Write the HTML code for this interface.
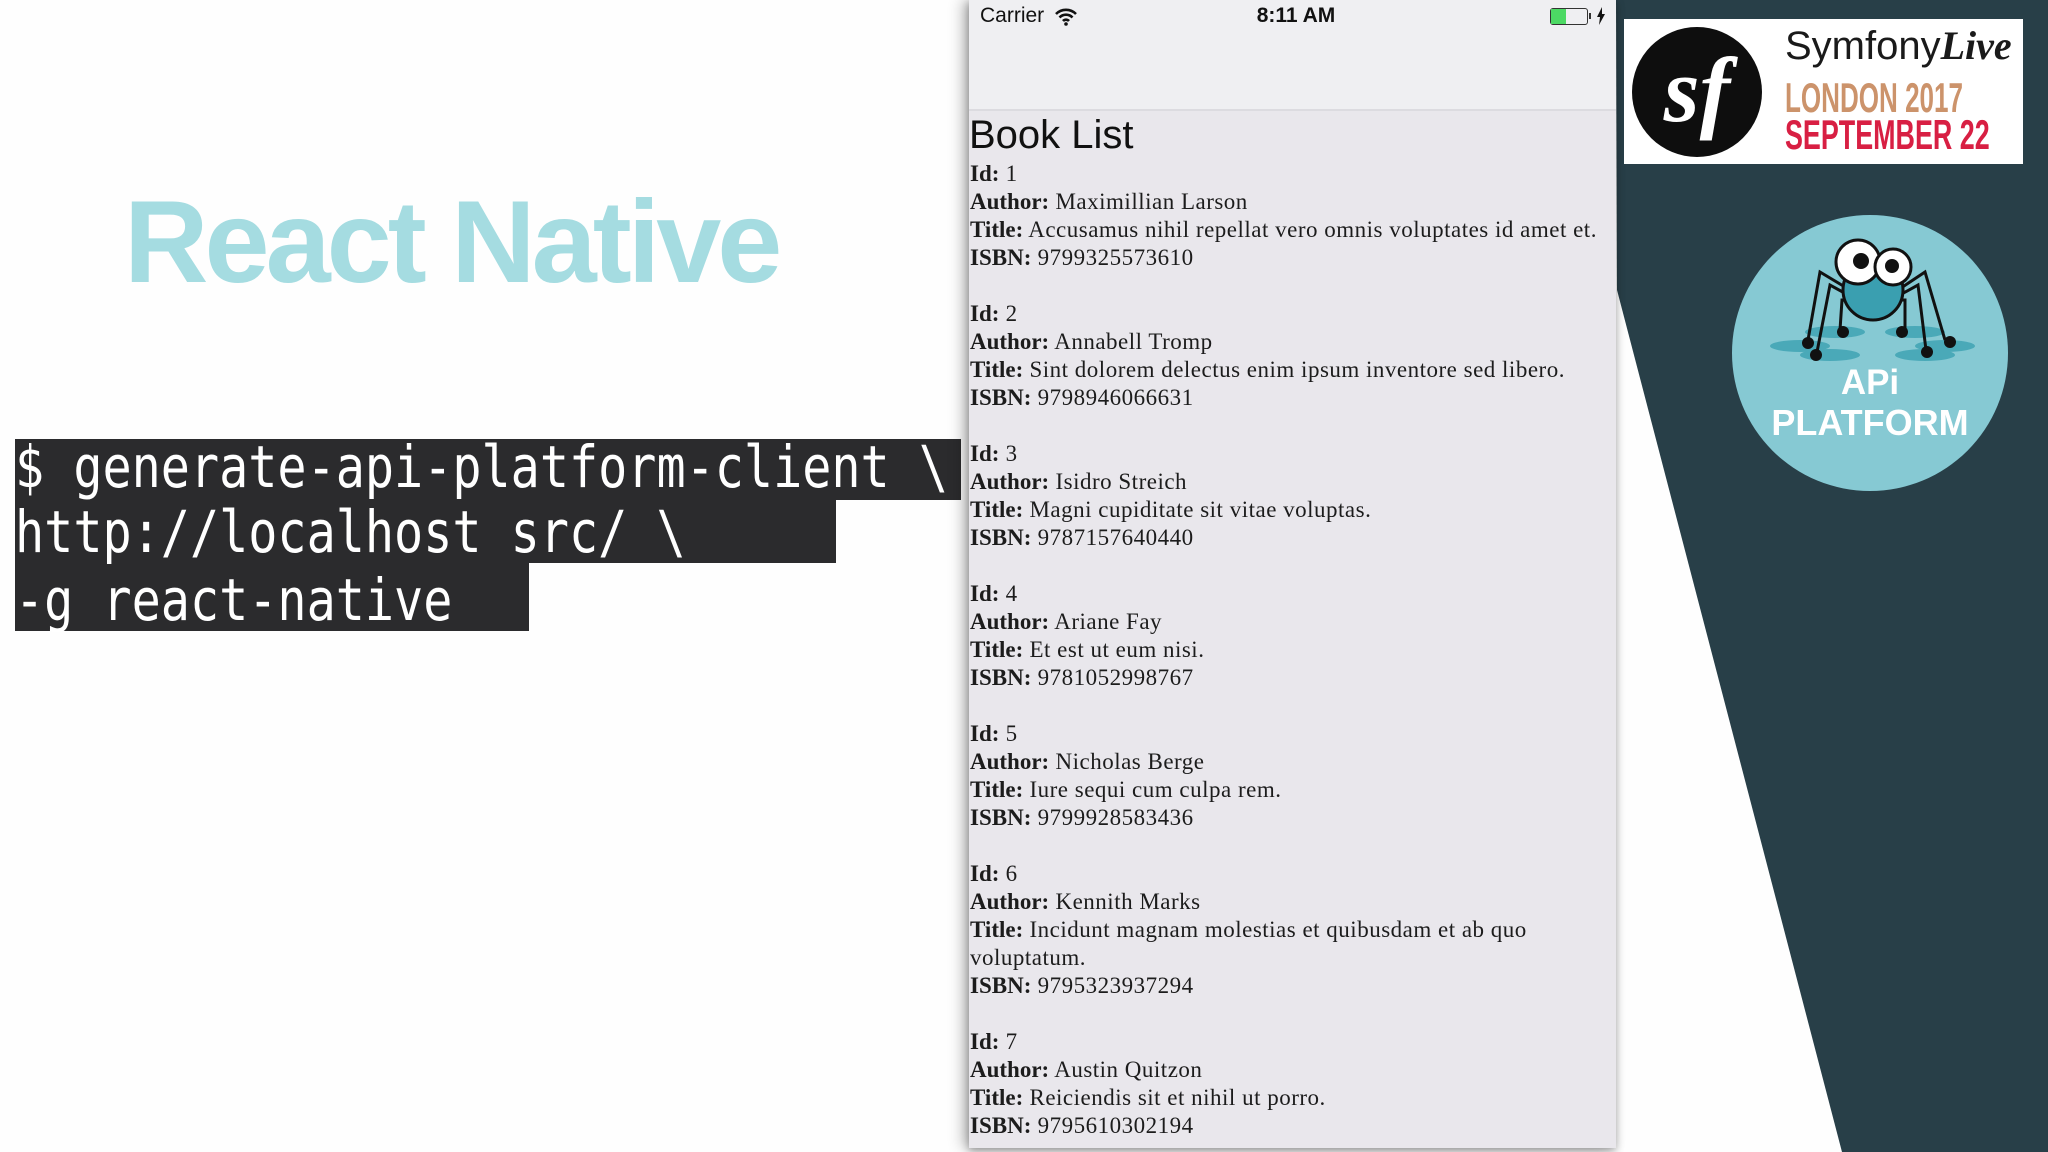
<!DOCTYPE html>
<html><head><meta charset="utf-8"><style>
html,body{margin:0;padding:0}
body{width:2048px;height:1152px;position:relative;overflow:hidden;background:#fefefe;font-family:"Liberation Sans",sans-serif}
.abs{position:absolute}
.rn{left:124px;top:183px;font-size:117px;line-height:117px;font-weight:bold;color:#a5dce1;letter-spacing:-4px;white-space:nowrap}
.tl{position:absolute;left:15px;background:#2b2b2d}
.tt{position:absolute;left:15px;color:#fff;font-family:"DejaVu Sans Mono",monospace;font-size:58px;line-height:62px;white-space:pre;transform:scaleX(0.835);transform-origin:0 0}
.phone{left:969px;top:0;width:647px;height:1148px;background:#e9e7ec;box-shadow:-6px 0 14px rgba(0,0,0,0.28),0 3px 8px rgba(0,0,0,0.3);overflow:hidden}
.sb{position:absolute;left:0;top:0;width:647px;height:109px;background:#efeff2;border-bottom:2px solid #dcdbe0}
.list{position:absolute;left:1px;top:160px;font-family:"Liberation Serif",serif;font-size:23px;letter-spacing:0.5px;line-height:28px;color:#1c1c1c;width:646px}
.list b{font-weight:bold;letter-spacing:0}
</style></head><body>
<svg class="abs" style="left:0;top:0" width="2048" height="1152"><polygon points="1616,0 2048,0 2048,1152 1842,1152 1617,290" fill="#283f48"/></svg>
<div class="abs rn">React Native</div>
<div class="tl" style="top:439px;width:946px;height:61px"></div>
<div class="tl" style="top:500px;width:821px;height:63px"></div>
<div class="tl" style="top:563px;width:514px;height:68px"></div>
<div class="tt" style="top:436px">$ generate-api-platform-client \</div>
<div class="tt" style="top:501px">http://localhost src/ \</div>
<div class="tt" style="top:569px">-g react-native</div>

<div class="abs phone">
 <div class="sb">
  <div class="abs" style="left:11px;top:4px;font-size:21px;color:#111">Carrier</div>
  <svg class="abs" style="left:86px;top:8px" width="22" height="18" viewBox="0 0 22 18"><path d="M1 6a14 14 0 0 1 20 0M4.5 9.5a9 9 0 0 1 13 0M8 13a4 4 0 0 1 6 0" stroke="#111" stroke-width="2.6" fill="none"/><circle cx="11" cy="16" r="1.8" fill="#111"/></svg>
  <div class="abs" style="left:250px;top:4px;width:154px;text-align:center;font-size:21px;font-weight:bold;color:#111">8:11 AM</div>
  <div class="abs" style="left:581px;top:8px;width:36px;height:15px;border:1.5px solid #333;border-radius:3px"><div style="width:15px;height:15px;background:#4cd964"></div></div>
  <div class="abs" style="left:620px;top:13px;width:2px;height:6px;background:#333"></div>
  <svg class="abs" style="left:627px;top:7px" width="10" height="18" viewBox="0 0 10 18"><path d="M6 0L1 10h3l-1 8 6-11H6z" fill="#111"/></svg>
 </div>
 <div class="abs" style="left:0;top:112px;font-size:40px;line-height:46px;color:#111">Book List</div>
 <div class="list">
<b>Id:</b> 1<br><b>Author:</b> Maximillian Larson<br><b>Title:</b> Accusamus nihil repellat vero omnis voluptates id amet et.<br><b>ISBN:</b> 9799325573610<br><br>
<b>Id:</b> 2<br><b>Author:</b> Annabell Tromp<br><b>Title:</b> Sint dolorem delectus enim ipsum inventore sed libero.<br><b>ISBN:</b> 9798946066631<br><br>
<b>Id:</b> 3<br><b>Author:</b> Isidro Streich<br><b>Title:</b> Magni cupiditate sit vitae voluptas.<br><b>ISBN:</b> 9787157640440<br><br>
<b>Id:</b> 4<br><b>Author:</b> Ariane Fay<br><b>Title:</b> Et est ut eum nisi.<br><b>ISBN:</b> 9781052998767<br><br>
<b>Id:</b> 5<br><b>Author:</b> Nicholas Berge<br><b>Title:</b> Iure sequi cum culpa rem.<br><b>ISBN:</b> 9799928583436<br><br>
<b>Id:</b> 6<br><b>Author:</b> Kennith Marks<br><b>Title:</b> Incidunt magnam molestias et quibusdam et ab quo<br>voluptatum.<br><b>ISBN:</b> 9795323937294<br><br>
<b>Id:</b> 7<br><b>Author:</b> Austin Quitzon<br><b>Title:</b> Reiciendis sit et nihil ut porro.<br><b>ISBN:</b> 9795610302194
 </div>
</div>

<div class="abs" style="left:1624px;top:19px;width:399px;height:145px;background:#fff"></div>
<div class="abs" style="left:1632px;top:27px;width:130px;height:130px;border-radius:50%;background:#0e0e0e;color:#fff;font-family:'Liberation Serif',serif;font-style:italic;font-weight:bold;font-size:92px;line-height:126px;text-align:center">sf</div>
<div class="abs" style="left:1785px;top:22px;font-size:40px;color:#1a1a1a;white-space:nowrap">Symfony<i style="font-family:'Liberation Serif',serif;font-weight:bold">Live</i></div>
<div class="abs" style="left:1785px;top:77px;font-size:42px;line-height:42px;font-weight:bold;color:#cc936b;transform:scaleX(0.62);transform-origin:0 0;white-space:nowrap">LONDON 2017</div>
<div class="abs" style="left:1785px;top:114px;font-size:42px;line-height:42px;font-weight:bold;color:#d81f43;transform:scaleX(0.64);transform-origin:0 0;white-space:nowrap">SEPTEMBER 22</div>

<div class="abs" style="left:1732px;top:215px;width:276px;height:276px;border-radius:50%;background:#86c9d3"></div>
<svg class="abs" style="left:1750px;top:230px" width="240" height="140" viewBox="1750 230 240 140">
 <g fill="#4aa9b8"><ellipse cx="1800" cy="346" rx="30" ry="6"/><ellipse cx="1830" cy="355" rx="30" ry="6"/><ellipse cx="1835" cy="332" rx="30" ry="6"/><ellipse cx="1915" cy="332" rx="30" ry="6"/><ellipse cx="1925" cy="355" rx="30" ry="6"/><ellipse cx="1945" cy="346" rx="30" ry="6"/></g>
 <g stroke="#111" stroke-width="3" fill="none">
  <path d="M1850 290L1820 272 1808 340M1850 296L1830 285 1817 352M1855 300L1842 300 1840 330M1895 300L1905 300 1905 330M1898 296L1918 285 1926 350M1898 290L1925 272 1945 340"/>
 </g>
 <g fill="#111"><circle cx="1808" cy="343" r="6"/><circle cx="1816" cy="355" r="6"/><circle cx="1843" cy="332" r="6"/><circle cx="1902" cy="332" r="6"/><circle cx="1927" cy="352" r="6"/><circle cx="1950" cy="342" r="6"/></g>
 <circle cx="1873" cy="290" r="30" fill="#3a9fb0" stroke="#111" stroke-width="3"/>
 <circle cx="1858" cy="262" r="22" fill="#fff" stroke="#111" stroke-width="3"/>
 <circle cx="1893" cy="267" r="18" fill="#fff" stroke="#111" stroke-width="3"/>
 <circle cx="1861" cy="261" r="8" fill="#111"/><circle cx="1892" cy="266" r="7" fill="#111"/>
</svg>
<div class="abs" style="left:1732px;top:364px;width:276px;text-align:center;color:#fff;font-weight:bold;font-size:35px;line-height:38px">APi</div>
<div class="abs" style="left:1732px;top:403px;width:276px;text-align:center;color:#fff;font-weight:bold;font-size:36px;line-height:40px">PLATFORM</div>
</body></html>
